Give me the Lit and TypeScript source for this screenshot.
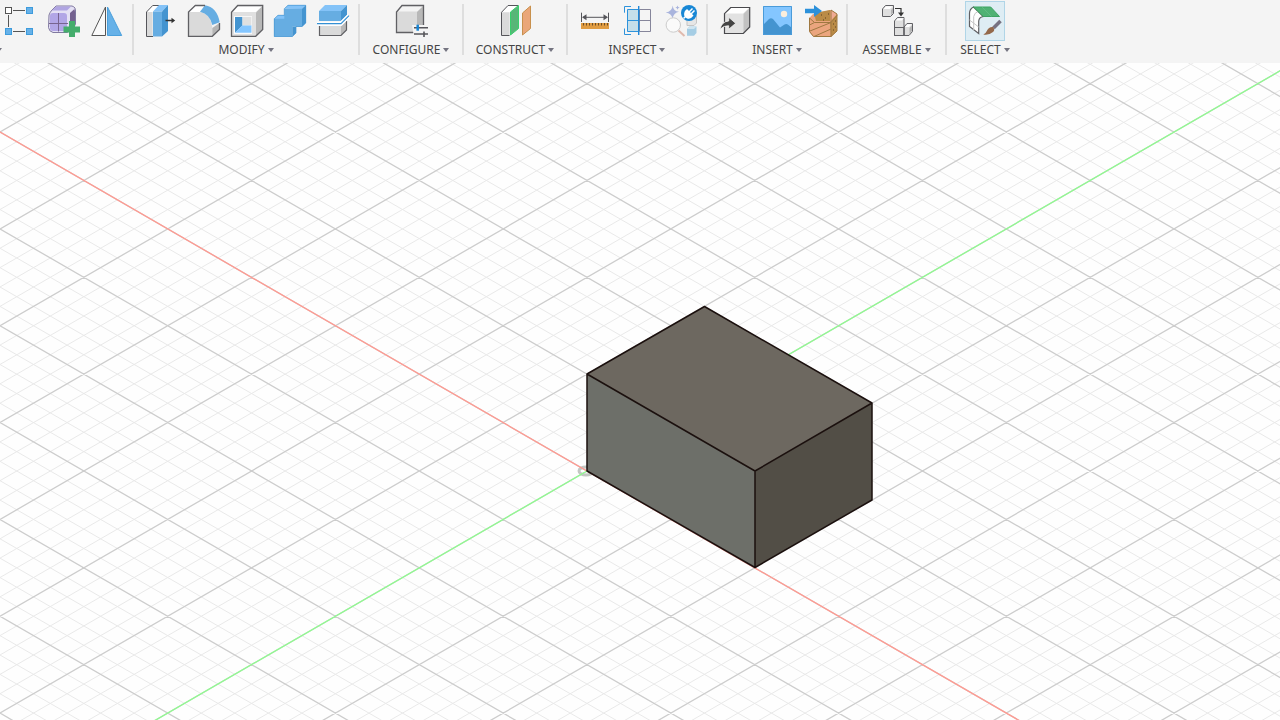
import { LitElement, html, svg, css } from "lit";
import { customElement, property } from "lit/decorators.js";

const icons: Record<string, unknown> = {
  points: svg`
    <path d="M13 9.5H25M8.500 14V26M13 30.5H25" stroke="#555" fill="none"/>
    <rect x="5.5" y="6.5" width="6" height="6" fill="#fff" stroke="#555"/>
    <g fill="#66b1e8" stroke="#3d9bdc"><rect x="26.5" y="6.5" width="6" height="6"/><rect x="5.5" y="27.5" width="6" height="6"/><rect x="26.5" y="27.5" width="6" height="6"/></g>`,
  form: svg`
    <path d="M6 14q1-3 3-5l4-4h16q4 1 3.500 6v12q-1 4-5 6l-3 2.500H10q-4-1-4.500-5z" fill="#e4e0f4" stroke="#8079a0"/>
    <path d="M13 5.500h15l-4 4H9z" fill="#b0a5e2"/>
    <path d="M27 12l4.500-4q1 3 .5 8v6l-5 3z" fill="#74618f"/>
    <rect x="7" y="12" width="17" height="18" rx="3" fill="#b2a6e6"/>
    <path d="M15.500 12v18.500M6 22.500h19" stroke="#78648f" fill="none"/>
    <path d="M26 20h6v5.500h5v6h-5V36h-6v-4.500h-5.500v-6H26z" fill="#45ad6c"/>`,
  mirror: svg`
    <path d="M5.800 34.500L19.500 6V34.500z" fill="#fafafa" stroke="#555"/>
    <path d="M21.500 6L35.700 34.500H21.500z" fill="#66b1e8" stroke="#4ba0dc"/>`,
  pull: svg`
    <path d="M6.500 11L12.500 4.500H27L21 11z" fill="#fff"/>
    <path d="M7 11h5.500v24.500H7z" fill="#dadada"/>
    <path d="M13 35.500H6.500V11L12.700 4.500H20" stroke="#55555a" fill="none"/>
    <path d="M13 10.500L19 4h9l-6 6.500z" fill="#84c3f8"/>
    <path d="M13 10.500h9v25h-9z" fill="#66ade2"/>
    <path d="M22 10.500L28 4v26l-6 5.500z" fill="#4494d0"/>
    <path d="M25.500 19.500h7" stroke="#333" stroke-width="1.500"/><path d="M31.500 16.800l3.700 2.700-3.700 2.700z" fill="#333"/>`,
  fillet: svg`
    <path d="M5.500 11L12.300 4.500H22L17 11z" fill="#fff"/>
    <path d="M5.500 11H17q11 2 12.300 16v8.300H5.500z" fill="#dadada"/>
    <path d="M29.300 27l7.200-5v6.500l-7.200 6.800z" fill="#b5b5b5"/>
    <path d="M17 10.700L22 4.200q12 2 14.700 17L29.300 24Q27 13 17 10.700z" fill="#66ade2"/>
    <path d="M22 4.500h-9.700L5.500 11v24.300h23.800l7.200-6.800V22" fill="none" stroke="#606064" stroke-width="1.300"/>`,
  shell: svg`
    <path d="M5.500 11.300L11.700 4.500h25v24l-7 6.800H5.500z" fill="#e0e0e0"/>
    <path d="M6.500 11L12 5.200h24L30 11z" fill="#fff"/><path d="M30 11.500L36.500 5v23.500L30 35z" fill="#b8b8b8"/>
    <path d="M5.500 11.300L11.700 4.500h25v24l-7 6.800H5.500z" fill="none" stroke="#606064" stroke-width="1.300"/>
    <rect x="8" y="15.300" width="18" height="17.500" fill="#fff"/>
    <path d="M9 16h7.500v8.500L9 31.700z" fill="#4494d0"/><path d="M16.500 24.300h9v7.400H9z" fill="#84c6ff"/><path d="M16.500 16h9v8.300h-9z" fill="#e0e0e0"/>`,
  combine: svg`
    <path d="M5 18l4-4h10v4z" fill="#84c3f8"/><path d="M15.300 7.700L19 4h18l-4 4z" fill="#84c3f8"/>
    <path d="M5 17.700h10.300v-10H33v18h-9.700v10H5z" fill="#66ade2"/>
    <path d="M33 7.700L37 4v18l-4 3.700zM23.300 25.700H27v6.300l-3.700 3.700z" fill="#4494d0"/>
    <path d="M5.300 35.500V17.700L9 14.300h6.300V7.700L19 4.300h17.700V22L33 25.500h-6V32l-3.700 3.500z" fill="none" stroke="#4796d2" stroke-width=".7"/>`,
  split: svg`
    <path d="M7 10l6-6h22l-6 6z" fill="#84c3f8"/><path d="M7 10h22v10H7z" fill="#66ade2"/><path d="M29 10l6-6v10l-6 6z" fill="#4494d0"/>
    <path d="M7.500 25H29v9.500H7.500z" fill="#dadada"/><path d="M29 25l5.500-5v9L29 34.500z" fill="#b8b8b8"/>
    <path d="M7.500 25v9.500H29l5.500-5.500v-9" fill="none" stroke="#606064" stroke-width="1.200"/>
    <path d="M5 22.700h24l8-8" fill="none" stroke="#fff" stroke-width="4"/>
    <path d="M5 22.700h24l8-8" fill="none" stroke="#3490d4" stroke-width="1.200"/>`,
  configure: svg`
    <path d="M5.500 11L11 4.500h21.500V25l-6 6.300h-21z" fill="#dadada"/><path d="M6.500 10.500L11.500 5.200H31.500l-5 5.300z" fill="#f4f4f4"/><path d="M26 11l6.500-6v20L26 31z" fill="#b8b8b8"/>
    <path d="M24 31.500H5.500V11L11 4.500h21.500V24" fill="none" stroke="#606064" stroke-width="1.300"/>
    <path d="M21 24h16v12H23z" fill="#f4f4f4"/>
    <path d="M23 26.700h14M23 33h14M33 30.500V36" stroke="#55555a" stroke-width="1.600"/><path d="M26.700 23.700v6" stroke="#1684d4" stroke-width="2.500"/>`,
  plane: svg`
    <path d="M6.500 11.300L13 4.500h10.500l-8 7z" fill="#fff"/><path d="M7 11.300h7.500v23H7z" fill="#dadada"/>
    <path d="M14.500 34.500h-8V11.300L13 4.500h10" fill="none" stroke="#55555a"/>
    <path d="M15.500 11l8-6.500v23l-8 6.500z" fill="#58b678" stroke="#39d06c"/>
    <path d="M27.500 12l8-7v22.500l-8 6.500z" fill="#eaa679" stroke="#c8904c"/>`,
  measure: svg`
    <path d="M7.500 11.700V21M34.500 11.700V21M9 16.300h24" stroke="#55555a" fill="none"/><path d="M8 16.300l4.500-3v6zM34 16.300l-4.500-3v6z" fill="#55555a"/>
    <path d="M7 22h28v6H7z" fill="#e09c42"/><path d="M9.500 22v2.500M12.500 22v2.500M15.500 22v2.500M18.500 22v2.500M21.500 22v2.500M24.500 22v2.500M27.500 22v2.500M30.500 22v2.500M33.500 22v2.500" stroke="#6e4e26"/>`,
  section: svg`
    <path d="M10.500 8.500h11v22h-11z" fill="#c5dfea"/><path d="M22.500 8.500h11v22h-11zM22.500 19.500h11" fill="none" stroke="#85859a"/>
    <path d="M10.500 8.500h11M10.500 8.500v22M10.500 30.500h11M10.500 19.500h11M7.500 11.700V5.500H14M7.500 27.500v6H14" fill="none" stroke="#2d93dc"/>
    <path d="M21.700 5v29" stroke="#2088d8" stroke-width="1.400"/>`,
  explore: svg`
    <path d="M12.700 4.500q.5 6 6.300 6.300-5.500 1-6.500 7-.8-5.500-6.800-6.300 6.500-1 7-7zM17.500 4.500l.7 1.500 1.500.500-1.500.7-.7 1.500-.7-1.500-1.500-.7 1.500-.5z" fill="#a9b4dd"/>
    <path d="M27 15h9.500v7L34 24.500h-7z" fill="#e6e6e6" stroke="#c5c5c5"/>
    <circle cx="13.300" cy="24" r="7.200" fill="#fafafa" stroke="#ccc"/><path d="M18.500 29.500l6 5.500" stroke="#dfb9ad" stroke-width="2"/>
    <path d="M27 28l2.500-2.500h7V32L34 34.700h-7z" fill="#a5cde4"/><path d="M27 28l2.500-2.500h7L34 28z" fill="#cfe5f1"/>
    <circle cx="29" cy="12" r="8" fill="#1887d5"/>
    <path d="M23.500 17.500l2.500-2.500M27 9l5.500 5.500q-2.500 3.500-5.500 2-3.500-2-1.500-6zM29.500 10.500l3-3M31.500 12.500l3-3" fill="#fff" stroke="#fff" stroke-width="1.500"/>`,
  derive: svg`
    <path d="M10.500 12.700l6.200-6.200h19V26l-6.400 6.500H10.500z" fill="#e2e2e2"/><path d="M11 12.500l6-5.500h18l-6 5.500z" fill="#fff"/><path d="M29.500 13l6-6v19l-6 6z" fill="#c2c2c2"/>
    <path d="M10.500 12.700l6.200-6.200h19V26l-6.400 6.500H10.500z" fill="none" stroke="#48484c" stroke-width="1.200"/>
    <path d="M14.700 16.300l7 6-7 6v-3.500q-5-.5-8.700 3.700 1.500-8 8.700-8.500z" fill="#444" stroke="#f4f4f4" stroke-width=".8"/>`,
  picture: svg`
    <path d="M6 5h29v29H6z" fill="#84c6ff"/><path d="M6 24l6-6q2-1.500 4 0l7 8.500 4.500-3q2-1 4 .5L35 27v7H6z" fill="#4494d0"/>
    <circle cx="27" cy="13" r="3.200" fill="#fbeedd"/><path d="M6.500 5.500h28v28h-28z" fill="none" stroke="#4a9bd9"/>`,
  box: svg`
    <path d="M9.300 17L13 13l18-4 6 4v17l-6 5.700H13.300l-4-5z" fill="#eba57e"/>
    <path d="M14 12l16-3v11H16z" fill="#ba8b46"/><path d="M30 21l7-8v17l-6 5.700z" fill="#ba8b46"/><path d="M31 9l6 4-6 6z" fill="#efaa93"/>
    <path d="M9.500 17l5 4.500h16.500V9M14.500 21.500L9.500 24M31 21.500l6-7M10 30l21-8.500M14 35.500L31 28M31 21.500V35.500M9.500 17v13.500l4 5H31l6-5.500V13l-6-4" fill="none" stroke="#9f7841"/>
    <path d="M21 14h1M25 17h1M28 13h1M33 23h1M35 20h1M33 29h1M35 26h1M23 19h1" stroke="#5a4020"/>
    <path d="M5 7.700h9V4l8 6-8 6v-3.700H5z" fill="#2b90da"/>`,
  assemble: svg`
    <g fill="#dfdfdf" stroke="#606064"><path d="M5.500 8l3-3.500h8v8l-3 3h-8zM17.500 20l3-3.500h6.500v18h-9.500zM17.500 26.500H27V34.500h-9.500zM27 26l3-3.500h5.500v8l-3.500 4h-5z"/></g>
    <path d="M6.500 8l2.500-2.700h6.700L13 8zM18.500 19.500l2.300-2.300h6l-2 2.300zM28 26l2.500-2.700h4.300L32 26z" fill="#fff"/>
    <path d="M14 9l2-2v5l-2 2zM32.500 27l2.500-2.500v5.500l-2.500 3z" fill="#b5b5b5"/>
    <path d="M18 7.500h6v5" fill="none" stroke="#333" stroke-width="1.200"/><path d="M21 11.500h6l-3 4z" fill="#333"/>`,
  select: svg`
    <path d="M8.500 6q-4 2-4 6.500v13l9.200 7V20q.5-4 4.600-4.500z" fill="#fff" stroke="#606064" stroke-width="1.200"/>
    <path d="M4.500 19l9.200 7M8.700 29V15.500q1-4 4-4.700" fill="none" stroke="#c6c6c6"/>
    <path d="M8.500 6h17.200l8.800 9.500H18.300z" fill="#4fb274" stroke="#3da363"/><path d="M17 6l9.500 9.500" stroke="#74c592" fill="none" stroke-width=".5"/>
    <path d="M35.500 20l-7 7" stroke="#777382" stroke-width="3.500"/><path d="M28 26q2.500 3 0 5-4 3.500-9.700 2.500 2.500-1 3.500-3.500 2-4.500 6.200-4z" fill="#94694b"/>`,
};

interface Tool { icon: string; label: string; active?: boolean }
interface Group { name: string; size?: string; tools: Tool[]; cut?: boolean }

const groups: Group[] = [
  { name: "Create", size: "first", cut: true, tools: [{ icon: "points", label: "Pattern" }, { icon: "form", label: "Create form" }, { icon: "mirror", label: "Mirror" }] },
  { name: "MODIFY", tools: [{ icon: "pull", label: "Press pull" }, { icon: "fillet", label: "Fillet" }, { icon: "shell", label: "Shell" }, { icon: "combine", label: "Combine" }, { icon: "split", label: "Split body" }] },
  { name: "CONFIGURE", size: "large", tools: [{ icon: "configure", label: "Configure" }] },
  { name: "CONSTRUCT", size: "large", tools: [{ icon: "plane", label: "Offset plane" }] },
  { name: "INSPECT", tools: [{ icon: "measure", label: "Measure" }, { icon: "section", label: "Section analysis" }, { icon: "explore", label: "Explore" }] },
  { name: "INSERT", tools: [{ icon: "derive", label: "Derive" }, { icon: "picture", label: "Canvas" }, { icon: "box", label: "Insert component" }] },
  { name: "ASSEMBLE", size: "medium", tools: [{ icon: "assemble", label: "Joint" }] },
  { name: "SELECT", size: "small", tools: [{ icon: "select", label: "Select", active: true }] },
];

@customElement("tool-group")
class ToolGroup extends LitElement {
  @property({ attribute: false }) group!: Group;

  static styles = css`
    :host { display: flex; flex-direction: column; align-items: center; flex: none; box-sizing: border-box; padding: 1px 6px 0; }
    .tools { display: flex; gap: 3px; }
    button { font: inherit; color: inherit; border: 0; background: none; padding: 0; margin: 0; }
    .tool { width: 40px; height: 40px; box-sizing: border-box; display: flex; align-items: center; justify-content: center; }
    .tool svg { flex: none; width: 40px; height: 40px; }
    .active { background: #deedf4; box-shadow: inset 0 0 0 1px #b0d5e7; }
    .menu { display: flex; align-items: center; gap: 3px; line-height: 18px; white-space: nowrap; }
    .caret { border: 3px solid transparent; border-top: 4px solid #747480; border-bottom: 0; }
    .cut { align-self: flex-start; margin-left: -10px; }
  `;

  render() {
    const { name, tools, cut } = this.group;
    return html`
      <div class="tools">
        ${tools.map((t) => html`<button class="tool ${t.active ? "active" : ""}" aria-label=${t.label}><svg viewBox="0 0 40 40">${icons[t.icon]}</svg></button>`)}
      </div>
      <button class="menu ${cut ? "cut" : ""}" aria-label=${name}>${cut ? "\u00a0" : name}<span class="caret"></span></button>`;
  }
}

const HALF = 83.86;
const RISE = 48.42;

@customElement("model-view")
class ModelView extends LitElement {
  static styles = css`
    :host { display: block; overflow: hidden; background: #fefefe; }
    svg { display: block; width: 100%; height: 100%; }
    .minor { stroke: #e9e9e9; }
    .major { stroke: #cdcdcd; stroke-width: 1.3; }
    .axis-x { stroke: #ff9a91; stroke-width: 1.3; }
    .axis-y { stroke: #90fa90; stroke-width: 1.3; }
    .edges { fill: none; stroke: #1b100e; stroke-width: 1.5; stroke-linejoin: round; }
    .ring { fill: none; stroke: #b4b9b4; stroke-width: 3; opacity: 0.8; }
  `;

  private lines(major: boolean) {
    const run = 40;
    let d = "";
    for (let k = -150; k <= 150; k++) {
      if ((k % 5 === 0) !== major) continue;
      const c = (k * 2 * RISE) / 5;
      d += `M${-HALF * run} ${c - RISE * run}L${HALF * run} ${c + RISE * run}`;
      d += `M${-HALF * run} ${c + RISE * run}L${HALF * run} ${c - RISE * run}`;
    }
    return d;
  }

  render() {
    return html`<svg role="img" aria-label="Solid box on the ground plane">
      <g transform="translate(587 408)">
        <path class="minor" d=${this.lines(false)} />
        <path class="major" d=${this.lines(true)} />
        <ellipse class="ring" cx="-1" cy="0" rx="7" ry="4" />
        <path class="axis-x" d="M${-HALF * 40} ${-RISE * 40}L${HALF * 40} ${RISE * 40}" />
        <path class="axis-y" d="M${-HALF * 40} ${RISE * 40}L${HALF * 40} ${-RISE * 40}" />
        <path d="M0 -97L117.500 -164.500L285 -68L168 0z" fill="#6d6860" />
        <path d="M0 -97L168 0V96.500L0 0z" fill="#6d6f69" />
        <path d="M168 0L285 -68V29L168 96.500z" fill="#524e46" />
        <path class="edges" d="M0 0V-97L117.500 -164.500L285 -68V29L168 96.500zM0 -97L168 0L285 -68M168 0V96.500" />
      </g>
    </svg>`;
  }
}

@customElement("app-root")
class AppRoot extends LitElement {
  static styles = css`
    :host { display: flex; flex-direction: column; height: 100vh; overflow: hidden; font: 12px "Noto Sans", sans-serif; color: #444; }
    .toolbar { display: flex; flex: none; height: 63px; overflow: hidden; background: #f4f4f4; }
    .first { padding-left: 0; }
    .large { width: 102px; }
    .medium { width: 97px; }
    .small { width: 76px; }
    .divider { flex: none; width: 2px; height: 51px; margin-top: 4px; background: #dedede; }
    .view { flex: 1; min-height: 0; }
  `;

  render() {
    return html`
      <div class="toolbar" role="toolbar">
        ${groups.map((g, i) => html`${i ? html`<div class="divider"></div>` : ""}<tool-group class=${g.size ?? ""} .group=${g}></tool-group>`)}
      </div>
      <model-view class="view"></model-view>`;
  }
}
